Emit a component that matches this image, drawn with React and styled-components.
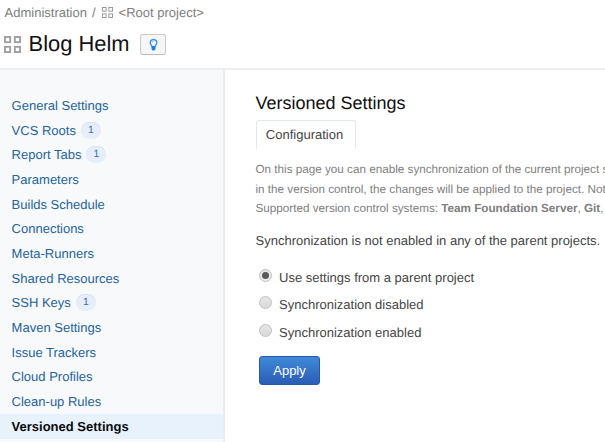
import React from "react";
import styled, { createGlobalStyle } from "styled-components";

const GlobalStyle = createGlobalStyle`
  * { box-sizing: border-box; }
  body {
    margin: 0;
    background: #fff;
    color: #444;
    font-family: "Liberation Sans", Arial, sans-serif;
    font-size: 13px;
    text-rendering: geometricPrecision;
    overflow: hidden;
  }
`;

const Page = styled.div`
  width: 605px;
  height: 442px;
  display: flex;
  flex-direction: column;
  overflow: hidden;
`;

const Header = styled.header`
  height: 70px;
  flex: none;
  border-bottom: 2px solid #eceef0;
`;

const Breadcrumbs = styled.nav`
  display: flex;
  align-items: center;
  height: 25px;
  padding-left: 4.6px;
  color: #7d7d7d;
  white-space: nowrap;
`;

const Slash = styled.span`
  margin: 0 6.4px 0 5px;
`;

const RootLink = styled.span`
  margin-left: 5.6px;
`;

const TitleRow = styled.div`
  display: flex;
  align-items: center;
  height: 38px;
  padding-left: 4px;
`;

const Title = styled.h1`
  margin: 0 10.5px 0 7.6px;
  font-size: 21.9px;
  font-weight: 400;
  line-height: 26px;
  color: #111;
  white-space: nowrap;
`;

const HintButton = styled.button`
  display: flex;
  align-items: center;
  justify-content: center;
  width: 26px;
  height: 21px;
  margin-top: 1px;
  padding: 0;
  border: 1px solid #cacaca;
  border-bottom-color: #bbb;
  border-radius: 3px;
  background: #f6f6f6;
`;

const Body = styled.div`
  display: flex;
  flex: 1;
  min-height: 0;
`;

const Sidebar = styled.aside`
  width: 225px;
  flex: none;
  padding-top: 23px;
  border-right: 2px solid #e9ecf0;
  background: #f8f9fb;
`;

const NavItem = styled.a`
  display: flex;
  align-items: center;
  height: 24.69px;
  padding-left: 11.6px;
  color: ${(p) => (p.$active ? "#0a0a0a" : "#24639c")};
  background: ${(p) => (p.$active ? "#e7f2fd" : "transparent")};
  font-weight: ${(p) => (p.$active ? 700 : 400)};
  white-space: nowrap;
`;

const Count = styled.span`
  display: flex;
  align-items: center;
  justify-content: center;
  width: 20px;
  height: 17px;
  margin-left: 5px;
  border-radius: 9px;
  background: #e5eef9;
  box-shadow: inset 0 1px 0 #d8e4f2;
  color: #3d6cbb;
  font-size: 10.4px;
`;

const Main = styled.main`
  flex: 1;
  min-width: 0;
  padding: 23px 0 0 30.5px;
  overflow: hidden;
`;

const Heading = styled.h2`
  margin: 0;
  height: 27px;
  font-size: 18px;
  font-weight: 400;
  line-height: 21px;
  color: #111;
`;

const Tab = styled.div`
  width: 100px;
  height: 29px;
  border: 1px solid #dfe7ef;
  border-bottom: 0;
  border-radius: 3px 3px 0 0;
  line-height: 28px;
  text-align: center;
  color: #444;
  padding-right: 2px;
`;

const Description = styled.p`
  margin: 11px 0 0;
  font-size: 11.7px;
  line-height: 19.5px;
  color: #808080;
  white-space: nowrap;
`;

const Status = styled.p`
  margin: 12px 0 0;
  line-height: 20px;
  white-space: nowrap;
`;

const Options = styled.div`
  padding: 13px 0 0 3.5px;
`;

const Option = styled.label`
  display: flex;
  align-items: center;
  height: 27.5px;
  white-space: nowrap;
`;

const Radio = styled.span`
  display: flex;
  align-items: center;
  justify-content: center;
  width: 13px;
  height: 13px;
  margin: 0 7px 4px 0;
  border: 1px solid #bfbfbf;
  border-radius: 50%;
  background: ${(p) =>
    p.$checked ? "linear-gradient(#e2e2e2, #f0f0f0)" : "linear-gradient(#e6e6e6, #d9d9d9)"};
`;

const Dot = styled.span`
  width: 7px;
  height: 7px;
  border-radius: 50%;
  background: #595959;
`;

const Apply = styled.button`
  width: 61px;
  height: 29px;
  margin: 10px 0 0 3.5px;
  padding: 0 0 1px;
  border: 1px solid #2857a8;
  border-radius: 3px;
  background: linear-gradient(#3f8ad8, #2a5db5);
  color: #fff;
  font: 13px "Liberation Sans", Arial, sans-serif;
`;

const ProjectIcon = ({ size, color, stroke }) => {
  const half = stroke / 2;
  const cell = size * 0.42;
  const far = size - cell + half;
  const side = cell - stroke;
  return (
    <svg width={size} height={size} fill="none" stroke={color} strokeWidth={stroke}>
      {[half, far].map((y) =>
        [half, far].map((x) => <rect key={`${x}-${y}`} x={x} y={y} width={side} height={side} />)
      )}
    </svg>
  );
};

const Bulb = () => (
  <svg width="9" height="12" viewBox="0 0 9 12" fill="none">
    <path d="M3.1 7.5C3 6.3 1.1 5.6 1.1 3.8a3.4 3.2 0 0 1 6.8 0C7.9 5.6 6 6.3 5.9 7.5z" stroke="#2386fb" strokeWidth="1.2" />
    <path d="M2.5 7.2h4v2.8l-1.1 1.5H3.6l-1.1-1.5z" fill="#147dfa" />
    <path d="M3 3.7c0-.8.6-1.3 1.4-1.3" stroke="#6db0f8" strokeWidth=".7" />
  </svg>
);

const items = [
  ["General Settings"],
  ["VCS Roots", 1],
  ["Report Tabs", 1],
  ["Parameters"],
  ["Builds Schedule"],
  ["Connections"],
  ["Meta-Runners"],
  ["Shared Resources"],
  ["SSH Keys", 1],
  ["Maven Settings"],
  ["Issue Trackers"],
  ["Cloud Profiles"],
  ["Clean-up Rules"],
  ["Versioned Settings"],
];

const options = [
  "Use settings from a parent project",
  "Synchronization disabled",
  "Synchronization enabled",
];

export default function App() {
  return (
    <Page>
      <GlobalStyle />
      <Header>
        <Breadcrumbs>
          <span>Administration</span>
          <Slash>/</Slash>
          <ProjectIcon size={11} color="#999" stroke={1} />
          <RootLink>&lt;Root project&gt;</RootLink>
        </Breadcrumbs>
        <TitleRow>
          <ProjectIcon size={17} color="#a0a0a0" stroke={1.9} />
          <Title>Blog Helm</Title>
          <HintButton><Bulb /></HintButton>
        </TitleRow>
      </Header>
      <Body>
        <Sidebar>
          {items.map(([label, count]) => (
            <NavItem key={label} $active={label === "Versioned Settings"}>
              {label}
              {count && <Count>{count}</Count>}
            </NavItem>
          ))}
        </Sidebar>
        <Main>
          <Heading>Versioned Settings</Heading>
          <Tab>Configuration</Tab>
          <Description>
            On this page you can enable synchronization of the current project s<br />
            in the version control, the changes will be applied to the project. Not<br />
            Supported version control systems: <b>Team Foundation Server</b>, <b>Git</b>,
          </Description>
          <Status>Synchronization is not enabled in any of the parent projects.</Status>
          <Options>
            {options.map((label, i) => (
              <Option key={label}>
                <Radio $checked={i === 0}>{i === 0 && <Dot />}</Radio>
                {label}
              </Option>
            ))}
          </Options>
          <Apply>Apply</Apply>
        </Main>
      </Body>
    </Page>
  );
}
